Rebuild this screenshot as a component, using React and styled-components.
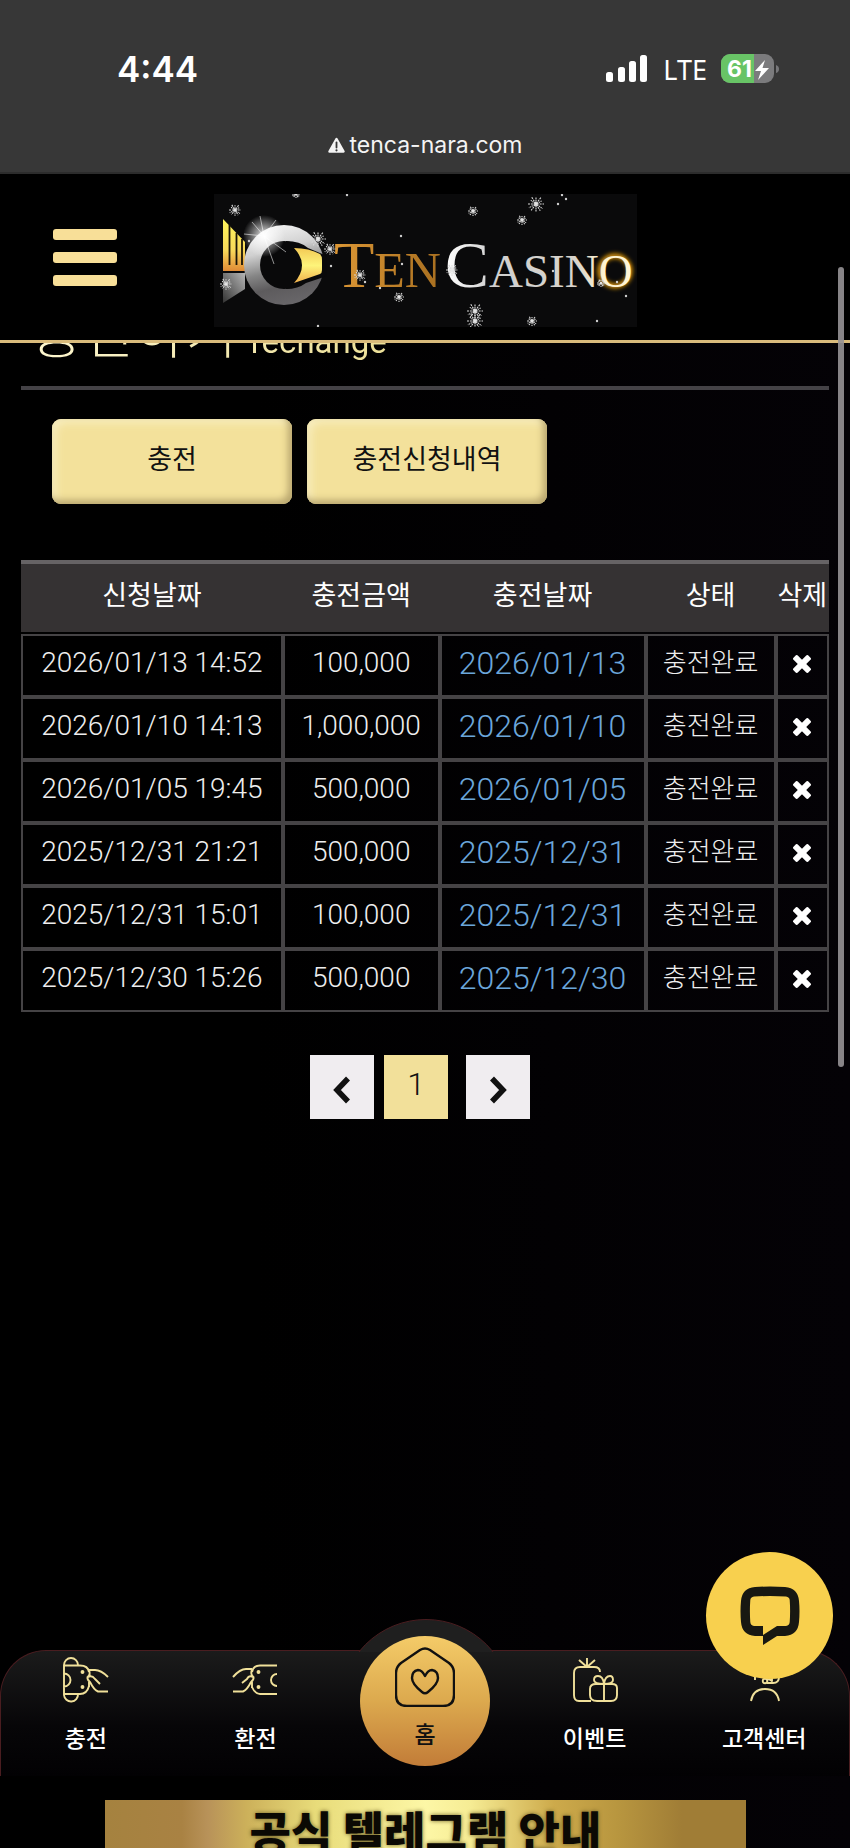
import React from 'react';
import styled, { createGlobalStyle, css } from 'styled-components';

const GlobalStyle = createGlobalStyle`
  * {
    box-sizing: border-box;
  }

  body {
    margin: 0;
    background: #000;
    color: #fff;
    font-family: Roboto, 'Noto Sans CJK KR', sans-serif;
  }

  button {
    border: 0;
    padding: 0;
    font-family: inherit;
    cursor: pointer;
  }

  a {
    color: inherit;
    text-decoration: none;
  }
`;

const Page = styled.div`
  position: relative;
  display: flex;
  flex-direction: column;
  min-height: 100vh;
  overflow: hidden;
  background: linear-gradient(90deg, #000 30%, #040206);
`;

/* phone status bar */
const StatusBar = styled.div`
  background: #373737;
  border-bottom: 2px solid #2c2c2c;
  height: 174px;
  padding-top: 48px;
  font-family: Inter, sans-serif;
`;

const StatusRow = styled.div`
  display: flex;
  align-items: center;
  justify-content: space-between;
  height: 42px;
  padding: 0 70px 0 117px;
`;

const Clock = styled.span`
  font-size: 35px;
  font-weight: 600;
`;

const StatusIcons = styled.div`
  display: flex;
  align-items: center;
  gap: 14px;

  svg {
    display: block;
  }
`;

const Network = styled.span`
  font-family: 'Noto Sans', sans-serif;
  font-size: 27px;
`;

const AddressBar = styled.div`
  display: flex;
  align-items: center;
  justify-content: center;
  gap: 5px;
  margin-top: 40px;
  font-size: 23px;
  line-height: 30px;
  color: #f4f4f4;
`;

/* site header */
const Header = styled.header`
  display: grid;
  grid-template-columns: 1fr auto 1fr;
  align-items: center;
  height: 169px;
  padding: 6px 0 0;
  border-bottom: 3px solid #d9bb7c;
  background: #000;
`;

const MenuButton = styled.button`
  display: flex;
  flex-direction: column;
  justify-self: start;
  gap: 12px;
  width: 64px;
  margin: 0 0 6px 53px;
  background: none;

  span {
    height: 11px;
    border-radius: 3px;
    background: #f8df98;
  }
`;

const LogoLink = styled.a`
  display: block;

  svg {
    display: block;
  }
`;

const Content = styled.main`
  flex: 1;
  overflow: hidden;
  padding: 0 21px;
`;

const PageTitle = styled.h1`
  margin: -43px 0 0;
  padding: 0 10px 10px;
  border-bottom: 4px solid #444246;
  font-size: 56px;
  font-weight: 300;
  line-height: 68px;

  span {
    background: linear-gradient(90deg, #fdf6cf, #ecdf98);
    background-clip: text;
    color: transparent;
  }

  small {
    font-size: 33px;
    font-weight: 400;
  }
`;

const Actions = styled.div`
  display: flex;
  gap: 15px;
  padding: 29px 31px 0;
`;

const ActionButton = styled.button`
  width: 240px;
  height: 85px;
  padding-bottom: 8px;
  border-radius: 9px;
  background: #f3e19b;
  box-shadow: inset -4px -4px 7px #b9a76f, inset 4px 4px 8px #f8eec0;
  color: #111;
  font-size: 27px;
  font-weight: 400;
`;

const HistoryTable = styled.table`
  width: 100%;
  margin-top: 56px;
  border-spacing: 0;
  table-layout: fixed;
`;

const HeadCell = styled.th`
  width: ${props => props.$width};
  height: 72px;
  padding: 0 0 10px;
  border-top: 4px solid #666365;
  background: #353233;
  font-size: 27px;
  font-weight: 400;
  white-space: nowrap;
`;

const Spacer = styled.tbody`
  td {
    height: 2px;
    padding: 0;
  }
`;

const Cell = styled.td`
  height: 63px;
  padding: 0 0 6px;
  border: 2px solid #454345;
  color: ${props => (props.$blue ? '#6ba6da' : '#eee')};
  font-size: ${props => props.$size || 28}px;
  font-weight: 300;
  line-height: 40px;
  text-align: center;
  white-space: nowrap;
`;

const DeleteButton = styled.button`
  display: block;
  margin: 2px auto 0;
  background: none;

  svg {
    display: block;
  }
`;

const Pagination = styled.nav`
  display: flex;
  justify-content: center;
  gap: 10px;
  margin: 43px 10px 0 0;
`;

const PageButton = styled.button`
  display: flex;
  align-items: center;
  justify-content: center;
  width: 64px;
  height: 64px;
  padding-top: 6px;
  background: #f0edf0;

  ${props =>
    props.$active &&
    css`
      margin-right: 8px;
      padding: 0 0 6px;
      background: #f2e09a;
      color: #111;
      font-size: 32px;
      font-weight: 300;
    `}
`;

/* bottom tab bar */
const TabBar = styled.nav`
  position: relative;
  display: grid;
  grid-template-columns: repeat(5, 1fr);
  height: 126px;
  border: 1px solid #4a1d20;
  border-bottom: 0;
  border-radius: 46px 46px 0 0;
  background: linear-gradient(#1b1b1b, #070608 60%, #020103);
  font-family: 'Noto Sans CJK KR', sans-serif;
`;

const Bump = styled.div`
  position: absolute;
  bottom: 124px;
  left: 50%;
  width: 170px;
  height: 33px;
  margin-left: -85px;
  overflow: hidden;

  &::before {
    content: '';
    display: block;
    width: 170px;
    height: 170px;
    border: 1px solid #4a1d20;
    border-radius: 50%;
    background: #1f1f1f;
  }
`;

const Tab = styled.a`
  display: flex;
  flex-direction: column;
  align-items: center;
  padding-top: 6px;
  color: #fff;
  font-size: 23px;
  font-weight: 500;
  line-height: 34px;

  svg {
    margin-bottom: 17px;
  }
`;

const HomeTab = styled.a`
  position: relative;
  display: flex;
  flex-direction: column;
  align-items: center;
  justify-self: center;
  width: 130px;
  height: 130px;
  margin-top: -15px;
  padding-top: 11px;
  border-radius: 50%;
  background: linear-gradient(#f4cb68, #dca94e 50%, #c27c38);
  color: #111;
  font-size: 23px;
  font-weight: 500;
  line-height: 34px;

  svg {
    margin-bottom: 9px;
  }
`;

const Banner = styled.a`
  height: 48px;
  margin: 24px 104px 0 105px;
  overflow: hidden;
  background: linear-gradient(
    90deg,
    #a5823f,
    #a98243 12%,
    #b89259 16%,
    #ccb05a 22%,
    #e8dc7a 33%,
    #fdf7a6 50%,
    #f6ec94 57%,
    #cdaa4b 70%,
    #b8963f 80%,
    #a07d36 90%
  );
  color: #0b0904;
  font-family: 'Noto Sans CJK KR', sans-serif;
  font-size: 45px;
  font-weight: 900;
  line-height: 62px;
  text-align: center;
  text-shadow: 0 0 4px #6d6026;
`;

const ChatButton = styled.button`
  position: absolute;
  right: 17px;
  bottom: 169px;
  display: flex;
  align-items: center;
  justify-content: center;
  width: 127px;
  height: 127px;
  border-radius: 50%;
  background: #f8d04e;
`;

const ScrollThumb = styled.div`
  position: absolute;
  top: 267px;
  right: 6px;
  width: 6px;
  height: 800px;
  border-radius: 3px;
  background: rgba(150, 146, 150, 0.9);
`;

const COLUMNS = [
  { label: '신청날짜', width: '32.4%' },
  { label: '충전금액', width: '19.4%' },
  { label: '충전날짜', width: '25.5%' },
  { label: '상태', width: '16.1%' },
  { label: '삭제', width: '6.6%' }
];

const RECORDS = [
  { requested: '2026/01/13 14:52', amount: '100,000', charged: '2026/01/13' },
  { requested: '2026/01/10 14:13', amount: '1,000,000', charged: '2026/01/10' },
  { requested: '2026/01/05 19:45', amount: '500,000', charged: '2026/01/05' },
  { requested: '2025/12/31 21:21', amount: '500,000', charged: '2025/12/31' },
  { requested: '2025/12/31 15:01', amount: '100,000', charged: '2025/12/31' },
  { requested: '2025/12/30 15:26', amount: '500,000', charged: '2025/12/30' }
];

// x, y, radius
const FLAKES = [
  [21, 16, 6], [82, 0, 4], [104, 45, 8], [116, 55, 6], [146, 81, 6], [185, 103, 5],
  [12, 90, 6], [259, 17, 5], [322, 10, 8], [308, 26, 5], [238, 76, 6], [261, 117, 8],
  [261, 127, 8], [318, 127, 5], [387, 89, 4]
];

const DOTS = [
  [133, 1], [117, 72], [151, 88], [166, 94], [188, 70], [187, 42], [104, 132], [344, 10],
  [352, 5], [348, 1], [383, 127], [412, 102], [339, 77], [403, 88], [35, 47]
];

const SignalIcon = () => (
  <svg width="43" height="28" viewBox="0 0 43 28" fill="#fff">
    <rect x="0" y="17" width="7" height="10" rx="2.5" />
    <rect x="12" y="12" width="7" height="15" rx="2.5" />
    <rect x="23" y="6" width="7" height="21" rx="2.5" />
    <rect x="34" y="0" width="7" height="27" rx="2.5" />
  </svg>
);

const Battery = () => (
  <svg width="59" height="30" viewBox="0 0 59 30">
    <clipPath id="battery-shape">
      <rect width="53" height="29" rx="9" />
    </clipPath>
    <g clipPath="url(#battery-shape)">
      <rect width="53" height="29" fill="#7b7b7d" />
      <rect width="33" height="29" fill="#68c466" />
    </g>
    <path d="M55 11q3 1 3 4t-3 4z" fill="#77777a" />
    <text x="6" y="23" fill="#fff" fontSize="23" fontWeight="700" fontFamily="Inter, sans-serif">61</text>
    <path d="M44 6L34 17h6l-3 9 11-12h-6.500z" fill="#fff" />
  </svg>
);

const WarningIcon = () => (
  <svg width="17" height="17" viewBox="0 0 17 17">
    <path d="M8.500 2L15.500 14.500H1.500z" fill="#f4f4f4" stroke="#f4f4f4" strokeWidth="2.500" strokeLinejoin="round" />
    <path d="M8.500 5.500v5" stroke="#373737" strokeWidth="1.800" strokeLinecap="round" />
    <circle cx="8.500" cy="13.300" r="1.100" fill="#373737" />
  </svg>
);

const Flake = ({ x, y, r }) => (
  <g transform={`translate(${x} ${y})`} stroke="#d8d8d8" fill="none">
    {[0, 35, 58, 90, 127, 152].map((angle, i) => (
      <path
        key={angle}
        d={`M${-r * (i % 2 ? 0.8 : 1)} 0H${r}`}
        transform={`rotate(${angle})`}
        strokeWidth="1.100"
        strokeDasharray={i % 2 ? '1.300 0.700' : '2 0.900'}
      />
    ))}
    <circle r={r * 0.3} fill="#eee" fillOpacity="0.600" stroke="none" />
  </g>
);

const Logo = () => (
  <svg width="423" height="133" viewBox="0 0 423 133" role="img" aria-label="Ten Casino">
    <defs>
      <linearGradient id="tail" x1="0" y1="0" x2="0" y2="1">
        <stop offset="0" stopColor="#fdf45c" />
        <stop offset="0.600" stopColor="#f8d95a" />
        <stop offset="1" stopColor="#e08a35" />
      </linearGradient>
      <linearGradient id="fin" x1="1" y1="0" x2="0" y2="1">
        <stop offset="0" stopColor="#b5b5b5" />
        <stop offset="1" stopColor="#333" />
      </linearGradient>
      <linearGradient id="ring" x1="0.350" y1="0" x2="0.600" y2="1">
        <stop offset="0" stopColor="#f2f2f2" />
        <stop offset="0.300" stopColor="#d0d0d0" />
        <stop offset="0.550" stopColor="#858585" />
        <stop offset="0.750" stopColor="#5d5b5d" />
        <stop offset="1" stopColor="#69676a" />
      </linearGradient>
      <radialGradient id="flare">
        <stop offset="0" stopColor="#fff" />
        <stop offset="0.350" stopColor="#fff" stopOpacity="0.600" />
        <stop offset="1" stopColor="#fff" stopOpacity="0" />
      </radialGradient>
      <linearGradient id="head" x1="0" y1="0" x2="0" y2="1">
        <stop offset="0" stopColor="#f3c955" />
        <stop offset="0.500" stopColor="#fdf47a" />
        <stop offset="1" stopColor="#f0b04c" />
      </linearGradient>
      <linearGradient id="gold" x1="0" y1="0" x2="1" y2="0">
        <stop offset="0" stopColor="#dc9735" />
        <stop offset="1" stopColor="#a86f20" />
      </linearGradient>
      <linearGradient id="silver" x1="0" y1="0" x2="1" y2="0">
        <stop offset="0" stopColor="#fff" />
        <stop offset="0.250" stopColor="#d0d0d0" />
        <stop offset="0.700" stopColor="#d8d4cc" />
        <stop offset="0.850" stopColor="#fff3d0" />
        <stop offset="1" stopColor="#fff6d8" />
      </linearGradient>
      <filter id="glow" x="-50%" y="-50%" width="200%" height="200%">
        <feGaussianBlur stdDeviation="2" />
      </filter>
    </defs>
    <rect width="423" height="133" fill="#0a0a0b" />
    <path d="M9 25L31 48V77H9z" fill="url(#tail)" />
    <path d="M15.500 31V71M22.500 39V71M28 45V71" stroke="#1a1408" strokeWidth="1.800" />
    <path d="M9 79H31V95L9 109z" fill="url(#fin)" />
    <circle cx="70" cy="71" r="40" fill="url(#ring)" />
    <circle cx="70" cy="71" r="24" fill="#09090a" />
    <path d="M72 47Q86 47 94 54L113 62V82L92 89Q84 95 72 95z" fill="#09090a" />
    <path d="M80 54Q95 54 106 60Q108 62 108 66V76Q108 79 106 80L80 89Q96 71 80 54z" fill="url(#head)" />
    <circle cx="50" cy="42" r="21" fill="url(#flare)" />
    <path d="M50 42L46 22M50 42L62 26M50 42L30 40M50 42L60 70M50 42L72 58M50 42L38 28" stroke="#fff" strokeWidth="0.800" opacity="0.700" />
    <g fontFamily="'Liberation Serif', serif">
      <text x="120" y="93" fontSize="66" fill="url(#gold)">
        T<tspan fontSize="50">EN</tspan>
      </text>
      <ellipse cx="401" cy="77" rx="15" ry="15" fill="none" stroke="#e09a10" strokeWidth="5" filter="url(#glow)" />
      <text x="231" y="93" fontSize="66" fill="url(#silver)">
        C<tspan fontSize="47">ASINO</tspan>
      </text>
    </g>
    {FLAKES.map(([x, y, r]) => (
      <Flake key={`${x}-${y}`} x={x} y={y} r={r} />
    ))}
    {DOTS.map(([x, y]) => (
      <circle key={`${x}-${y}`} cx={x} cy={y} r="1.200" fill="#cfcfcf" />
    ))}
  </svg>
);

const CrossIcon = () => (
  <svg width="18" height="18" viewBox="0 0 18 18" fill="#fff">
    <rect x="-1.500" y="6" width="21" height="6" rx="1.500" transform="rotate(45 9 9)" />
    <rect x="-1.500" y="6" width="21" height="6" rx="1.500" transform="rotate(-45 9 9)" />
  </svg>
);

const Chevron = ({ flip }) => (
  <svg width="18" height="28" viewBox="0 0 18 28" fill="none" stroke="#111" strokeWidth="5.500">
    <path d={flip ? 'M3 2.500L14 14L3 25.500' : 'M15 2.500L4 14L15 25.500'} />
  </svg>
);

const TabIcon = ({ children }) => (
  <svg width="46" height="46" viewBox="0 0 46 46" fill="none" stroke="#f0e09a" strokeWidth="1.900" strokeLinejoin="round">
    {children}
  </svg>
);

const DepositIcon = () => (
  <TabIcon>
    <path d="M1 38V8a7 7 0 0 1 14 0M1 8.500H17Q25 8.500 26 15M1 37H17Q24 37 26 29M15 37a7 7 0 0 1-14 1M1 16.500a6 6 0 0 1 0 13" />
    <path d="M26 13H32Q38 13 45 20M26 13Q28 18 24.500 20Q24 23 27 25Q31 33 35 34.500H45M25 20Q29 18 32 22L37 27M26 24V30" />
    <circle cx="19.500" cy="15" r="1" fill="#f0e09a" />
    <circle cx="19.500" cy="30" r="1" fill="#f0e09a" />
  </TabIcon>
);

const WithdrawIcon = () => (
  <TabIcon>
    <path d="M45 8.500H28Q21 8.500 20 15M45 37H28Q23 37 20 30M45 17a6 6 0 1 0 0 12" />
    <path d="M20 12H14Q8 12 1 20M20 12Q18 18 21.500 20Q22 23 19 25Q15 33 11 34.500H1M21 20Q17 18 15 22L10 26M20 25V31" />
    <circle cx="26.500" cy="15" r="1" fill="#f0e09a" />
    <circle cx="26.500" cy="30" r="1" fill="#f0e09a" />
  </TabIcon>
);

const EventIcon = () => (
  <TabIcon>
    <path d="M15 10V1M15 10L7 3M15 10L23 3M19 44H7Q2 44 2 38V16Q2 10 8 10H22Q28 10 28 15" />
    <path d="M24 27H40Q45 27 45 31V38Q45 44 39 44H25Q18 44 18 38V32Q18 27 24 27zM32 27V44" />
    <path d="M32 27Q22 27 22 23Q22 19 26 19Q31 19 32 27Q33 19 38 19Q41 19 41 23Q41 27 32 27" />
  </TabIcon>
);

const SupportIcon = () => (
  <TabIcon>
    <path d="M10 44Q12 32 24 32T38 44M14 23V15Q14 5 24 5T38 15V20Q38 26 32 26H26M31 19V24Q29 22 26 22" />
    <circle cx="24" cy="24" r="2.300" />
  </TabIcon>
);

const HomeIcon = () => (
  <svg width="60" height="60" viewBox="0 0 60 60" fill="none" stroke="#111" strokeWidth="2.400" strokeLinejoin="round">
    <path d="M25 3Q30 0 35 3L54 16Q59 20 59 26V48Q59 59 48 59H12Q1 59 1 48V26Q1 20 6 16z" />
    <path d="M30 29Q27 23 23 23Q17 24 17 31Q17 37 27 45Q30 47.500 33 45Q43 37 43 31Q43 24 37 23Q33 23 30 29z" />
  </svg>
);

const ChatIcon = () => (
  <svg width="60" height="60" viewBox="0 0 60 60">
    <path
      fillRule="evenodd"
      d="M15 1Q30 0 45 1Q58 2 59 15Q60 25 59 36Q58 49 45 50H37L23 59V50H15Q2 49 1 36Q0 25 1 15Q2 2 15 1zM14 10.500Q10.500 11 10.300 14Q9.500 25 10.300 36Q10.500 39.500 14 40H23V49L37 40H46Q49.500 39.500 49.700 36Q50.500 25 49.700 14Q49.500 11 46 10.500Q30 9.500 14 10.500z"
      fill="#181812"
    />
  </svg>
);

const App = () => (
  <Page>
    <GlobalStyle />
    <StatusBar>
      <StatusRow>
        <Clock>4:44</Clock>
        <StatusIcons>
          <SignalIcon />
          <Network>LTE</Network>
          <Battery />
        </StatusIcons>
      </StatusRow>
      <AddressBar>
        <WarningIcon />
        <span>tenca-nara.com</span>
      </AddressBar>
    </StatusBar>

    <Header>
      <MenuButton type="button" aria-label="menu">
        <span />
        <span />
        <span />
      </MenuButton>
      <LogoLink href="#">
        <Logo />
      </LogoLink>
    </Header>

    <Content>
      <PageTitle>
        <span>
          충전하기 <small>rechange</small>
        </span>
      </PageTitle>
      <Actions>
        <ActionButton type="button">충전</ActionButton>
        <ActionButton type="button">충전신청내역</ActionButton>
      </Actions>

      <HistoryTable>
        <thead>
          <tr>
            {COLUMNS.map(({ label, width }) => (
              <HeadCell key={label} $width={width}>{label}</HeadCell>
            ))}
          </tr>
        </thead>
        <Spacer>
          <tr>
            <td colSpan={5} />
          </tr>
        </Spacer>
        <tbody>
          {RECORDS.map(({ requested, amount, charged }) => (
            <tr key={requested}>
              <Cell>{requested}</Cell>
              <Cell>{amount}</Cell>
              <Cell $size={32} $blue>{charged}</Cell>
              <Cell $size={26}>충전완료</Cell>
              <Cell>
                <DeleteButton type="button" aria-label="삭제">
                  <CrossIcon />
                </DeleteButton>
              </Cell>
            </tr>
          ))}
        </tbody>
      </HistoryTable>

      <Pagination>
        <PageButton type="button" aria-label="previous">
          <Chevron />
        </PageButton>
        <PageButton type="button" $active>1</PageButton>
        <PageButton type="button" aria-label="next">
          <Chevron flip />
        </PageButton>
      </Pagination>
    </Content>

    <TabBar>
      <Bump />
      <Tab href="#">
        <DepositIcon />
        충전
      </Tab>
      <Tab href="#">
        <WithdrawIcon />
        환전
      </Tab>
      <HomeTab href="#">
        <HomeIcon />
        홈
      </HomeTab>
      <Tab href="#">
        <EventIcon />
        이벤트
      </Tab>
      <Tab href="#">
        <SupportIcon />
        고객센터
      </Tab>
    </TabBar>

    <Banner href="#">공식 텔레그램 안내</Banner>

    <ChatButton type="button" aria-label="chat">
      <ChatIcon />
    </ChatButton>
    <ScrollThumb />
  </Page>
);

export default App;
